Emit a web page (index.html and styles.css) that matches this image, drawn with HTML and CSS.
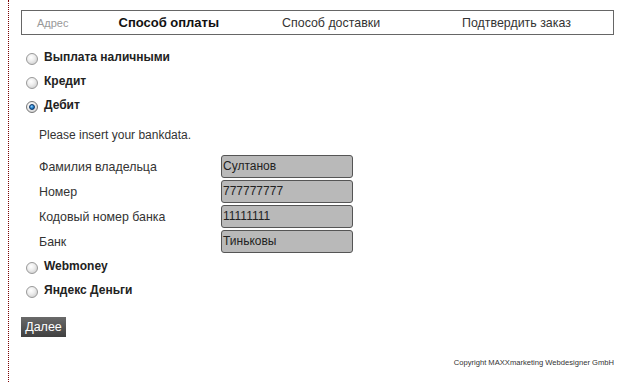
FILE: index.html
```html
<!DOCTYPE html>
<html lang="ru">
<head>
<meta charset="utf-8">
<link rel="stylesheet" href="styles.css">
</head>
<body>
<div class="page">
  <nav class="steps">
    <span class="step step-done">Адрес</span>
    <span class="step step-active">Способ оплаты</span>
    <span class="step">Способ доставки</span>
    <span class="step">Подтвердить заказ</span>
  </nav>

  <div class="options">
    <label class="opt"><span class="radio"></span><span class="opt-label">Выплата наличными</span></label>
    <label class="opt"><span class="radio"></span><span class="opt-label">Кредит</span></label>
    <label class="opt"><span class="radio radio-on"></span><span class="opt-label">Дебит</span></label>

    <div class="bank">
      <p class="hint">Please insert your bankdata.</p>
      <div class="field"><span class="field-label">Фамилия владельца</span><span class="input">Султанов</span></div>
      <div class="field"><span class="field-label">Номер</span><span class="input">777777777</span></div>
      <div class="field"><span class="field-label">Кодовый номер банка</span><span class="input">11111111</span></div>
      <div class="field"><span class="field-label">Банк</span><span class="input">Тиньковы</span></div>
    </div>

    <label class="opt"><span class="radio"></span><span class="opt-label">Webmoney</span></label>
    <label class="opt"><span class="radio"></span><span class="opt-label">Яндекс Деньги</span></label>
  </div>

  <button class="next">Далее</button>

  <footer class="copy">Copyright MAXXmarketing Webdesigner GmbH</footer>
</div>
</body>
</html>
```

FILE: styles.css
```css
html, body {
  margin: 0;
  padding: 0;
  background: #fff;
}
body {
  font-family: "Liberation Sans", Arial, sans-serif;
  font-size: 12px;
  color: #222;
}
.page {
  margin-left: 8px;
  border-left: 1px dotted #7a0000;
  padding: 10px 8px 0 12px;
  min-height: 372px;
  width: 593px;
}
.steps {
  display: flex;
  align-items: center;
  height: 23px;
  border: 1px solid #666;
  box-sizing: content-box;
}
.step {
  font-size: 12.4px;
  color: #333;
  white-space: nowrap;
}
.step:nth-child(1) { margin-left: 15px; font-size: 11px; color: #999; }
.step:nth-child(2) { margin-left: 50px; font-weight: bold; font-size: 13px; color: #111; }
.step:nth-child(3) { margin-left: 63px; }
.step:nth-child(4) { margin-left: 82px; }

.options {
  margin-top: 10px;
}
.opt {
  display: flex;
  align-items: center;
  height: 24px;
}
.radio {
  width: 12px;
  height: 12px;
  border-radius: 50%;
  border: 1px solid #999;
  background: radial-gradient(circle at 40% 35%, #fff 0%, #eee 40%, #c4c4c4 100%);
  margin-left: 5px;
  margin-right: 6px;
  margin-top: 4px;
  box-sizing: border-box;
  position: relative;
}
.radio-on {
  border-color: #777;
}
.radio-on::after {
  content: "";
  position: absolute;
  left: 2px;
  top: 2px;
  width: 6px;
  height: 6px;
  box-sizing: border-box;
  border-radius: 50%;
  border: 1px solid #0d3566;
  background: radial-gradient(circle at 40% 35%, #8fd0ff 0%, #1e7cc8 55%, #0d4a8c 100%);
}
.opt-label {
  font-weight: bold;
  color: #222;
  font-size: 12px;
}
.bank {
  padding-left: 18px;
  padding-top: 8px;
  padding-bottom: 0;
}
.hint {
  margin: 0 0 9px 0;
  height: 20px;
  line-height: 20px;
  color: #333;
}
.field {
  display: flex;
  align-items: center;
  height: 25px;
}
.field-label {
  width: 182px;
  color: #333;
  font-size: 12.4px;
}
.input {
  width: 132px;
  height: 23px;
  box-sizing: border-box;
  background: #b9b9b9;
  border: 1px solid #555;
  border-radius: 3px;
  padding-left: 1px;
  line-height: 21px;
  color: #222;
  font-size: 12px;
}
.next {
  display: block;
  margin-top: 15px;
  height: 20px;
  width: 45px;
  padding: 0;
  border: none;
  background: linear-gradient(#6a6a6a, #3f3f3f);
  color: #fff;
  font-family: "Liberation Sans", Arial, sans-serif;
  font-size: 12.5px;
}
.copy {
  margin-top: 21px;
  text-align: right;
  font-size: 7.6px;
  color: #333;
}
```
